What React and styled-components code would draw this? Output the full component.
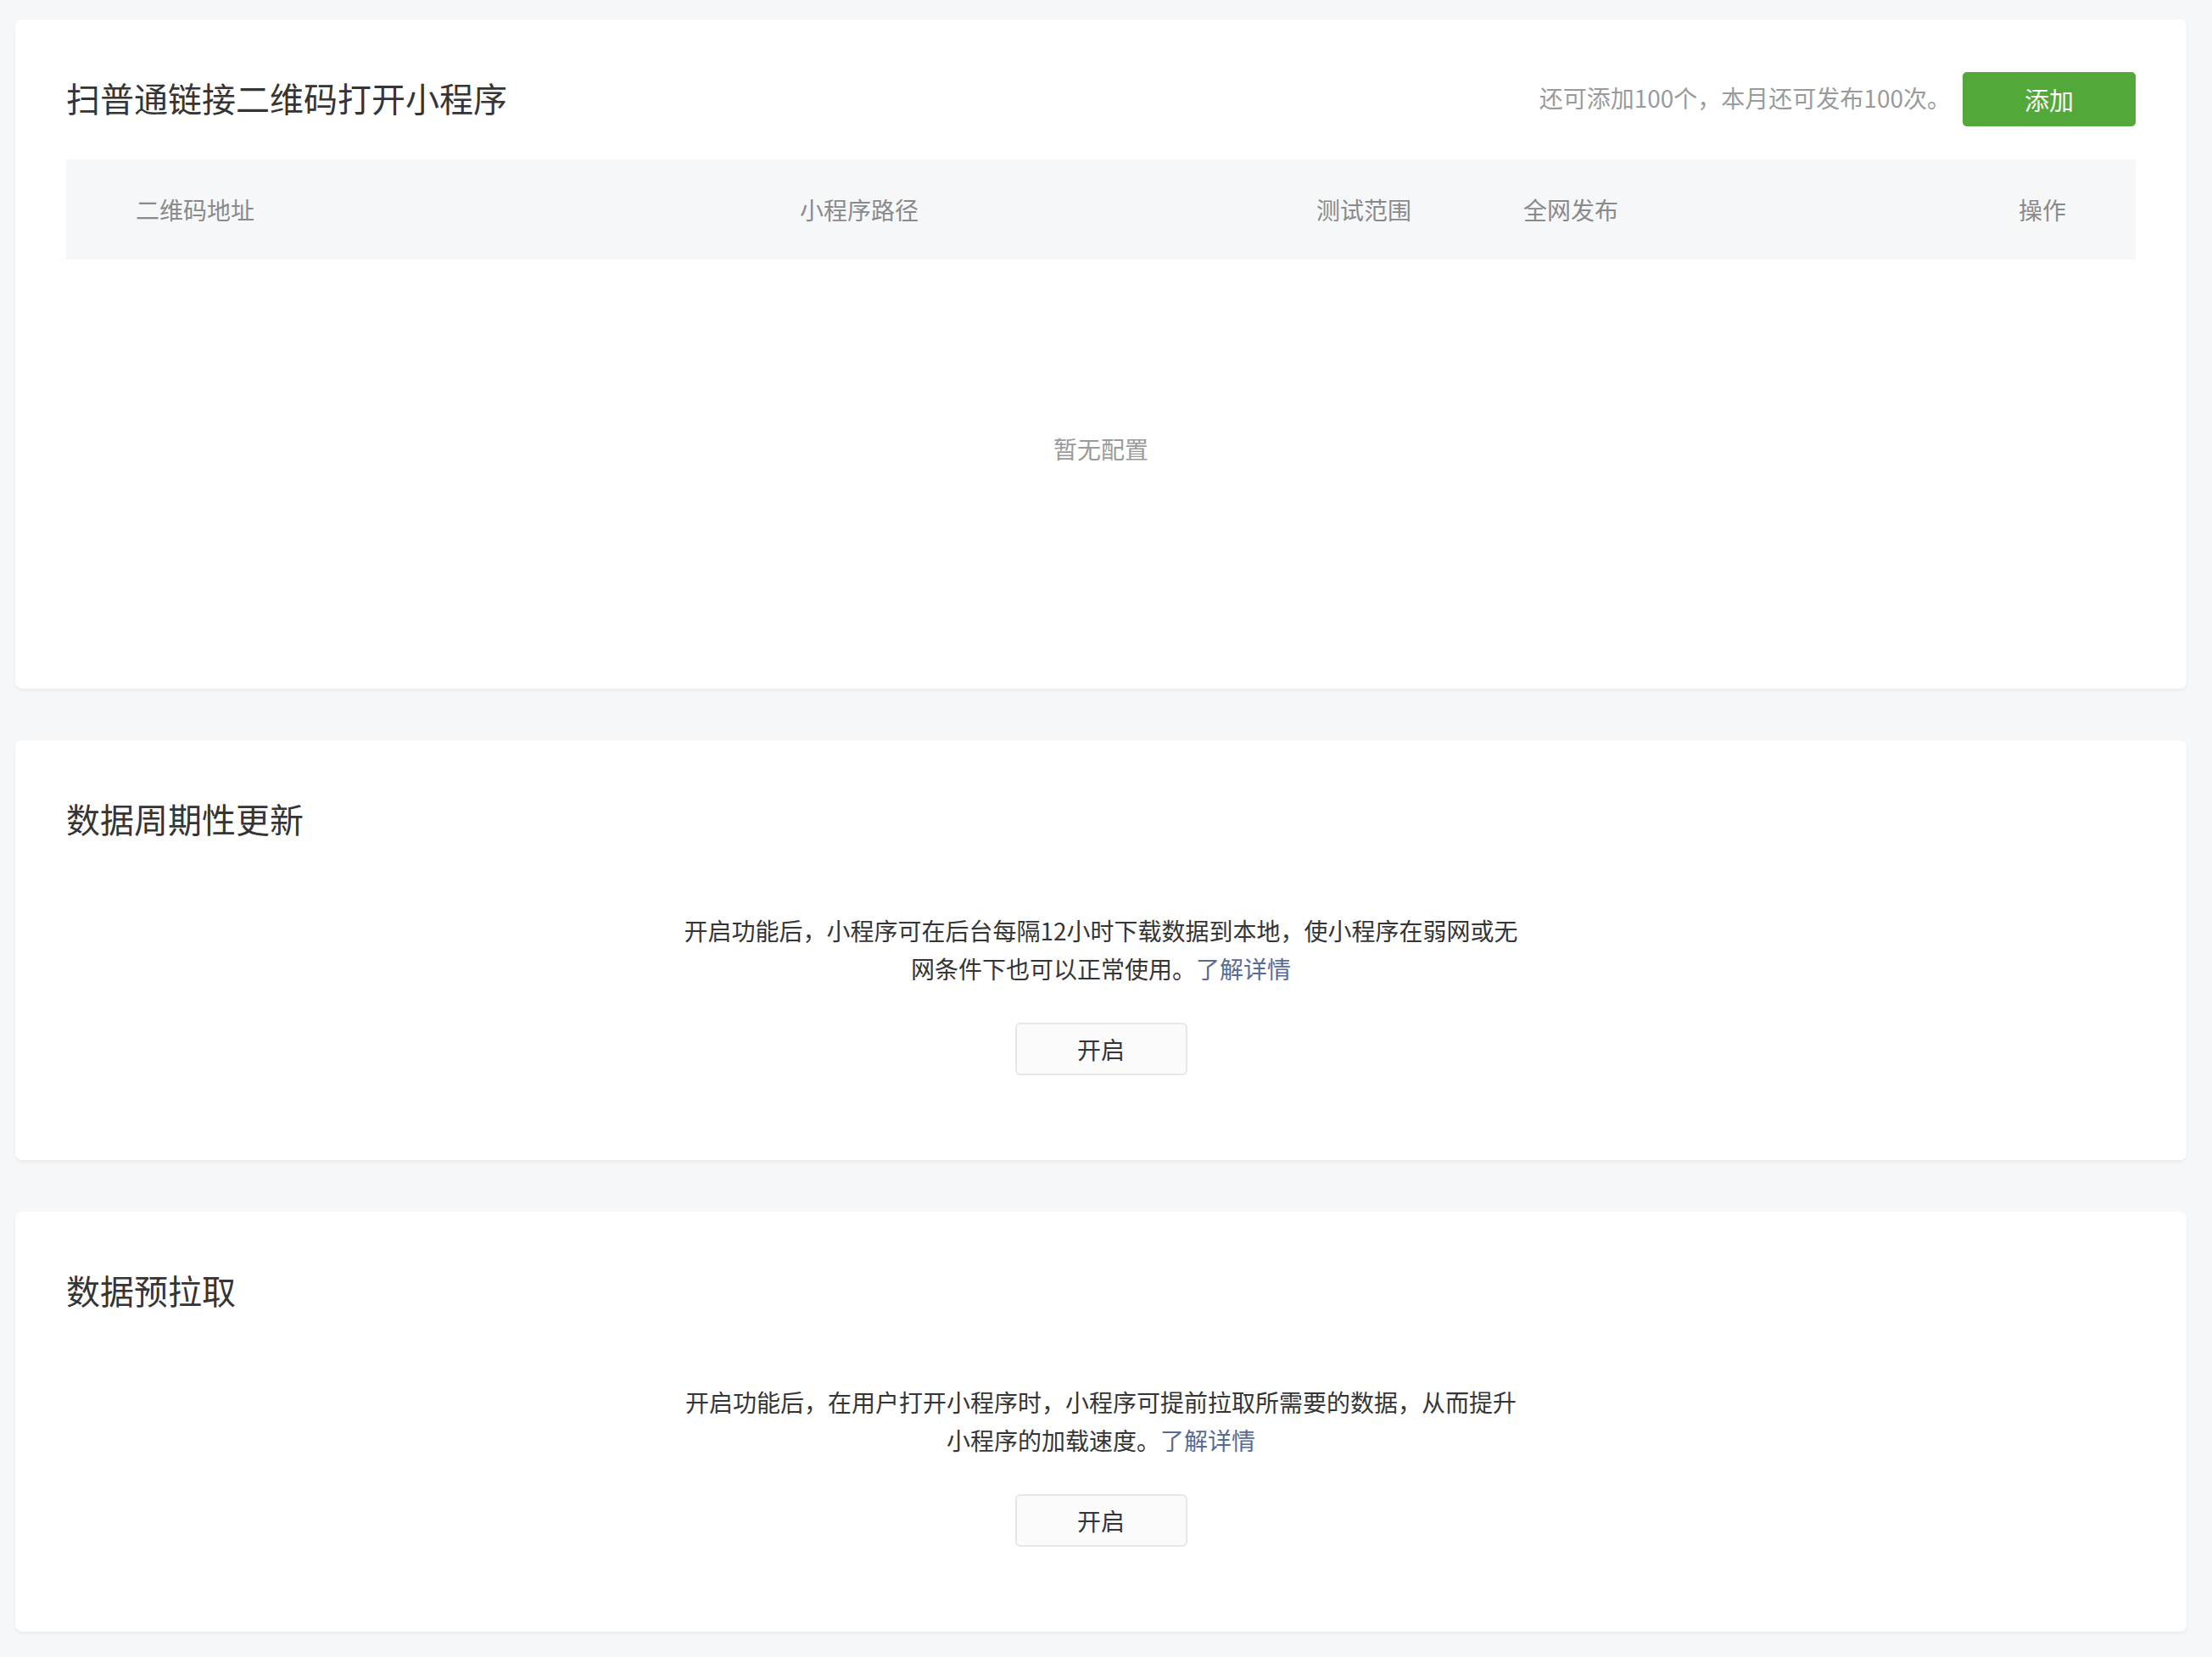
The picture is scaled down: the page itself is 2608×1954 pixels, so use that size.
import styled, { createGlobalStyle } from "styled-components";

const GlobalStyle = createGlobalStyle`
    html, body {
        margin: 0;
        padding: 0;
        background: #f6f7f9;
    }
    body {
        font-family: "Noto Sans CJK SC", "Noto Sans", "Liberation Sans", sans-serif;
        color: #353535;
    }
`;

const Page = styled.div`
    display: flex;
    flex-direction: column;
    gap: 61px;
    padding: 23px 30px 28px 18px;
    min-height: 1954px;
    box-sizing: border-box;
`;

const Card = styled.section`
    background: #fff;
    border-radius: 8px;
    box-shadow: 0 2px 4px rgba(0, 0, 0, 0.06);
    padding: 60px 60px ${({ $bottom }) => $bottom || 60}px 60px;
    display: flex;
    flex-direction: column;
`;

const CardHead = styled.div`
    display: flex;
    align-items: center;
    justify-content: space-between;
    height: 64px;
`;

const Title = styled.h2`
    margin: 0;
    font-size: 40px;
    font-weight: 400;
    line-height: 64px;
    color: #353535;
`;

const HeadRight = styled.div`
    display: flex;
    align-items: center;
    gap: 14px;
`;

const Quota = styled.span`
    font-size: 28px;
    color: #9a9a9a;
`;

const PrimaryButton = styled.button`
    width: 204px;
    height: 64px;
    margin-top: 4px;
    border: none;
    border-radius: 5px;
    background: #52a839;
    color: #fff;
    font-family: inherit;
    font-size: 29px;
    cursor: pointer;
`;

const TableHead = styled.div`
    margin-top: 41px;
    height: 118px;
    background: #f6f7f9;
    display: grid;
    grid-template-columns: 783px 609px 244px 1fr auto;
    align-items: center;
    padding: 0 82px;
`;

const HeadCell = styled.div`
    font-size: 28px;
    color: #8a8a8a;
`;

const Empty = styled.div`
    height: 446px;
    display: flex;
    align-items: center;
    justify-content: center;
    font-size: 28px;
    color: #9a9a9a;
`;

const Body = styled.div`
    margin-top: 78px;
    display: flex;
    flex-direction: column;
    align-items: center;
    gap: 41px;
`;

const Desc = styled.p`
    margin: 0;
    width: 984px;
    font-size: 28px;
    line-height: 45px;
    text-align: center;
    color: #353535;
`;

const Link = styled.a`
    color: #576b95;
    text-decoration: none;
    cursor: pointer;
`;

const DefaultButton = styled.button`
    width: 203px;
    height: 62px;
    border: 2px solid #e4e7eb;
    border-radius: 6px;
    background: #fbfbfb;
    color: #353535;
    font-family: inherit;
    font-size: 28px;
    cursor: pointer;
`;

const features = [
    {
        title: "数据周期性更新",
        text: "开启功能后，小程序可在后台每隔12小时下载数据到本地，使小程序在弱网或无网条件下也可以正常使用。",
    },
    {
        title: "数据预拉取",
        text: "开启功能后，在用户打开小程序时，小程序可提前拉取所需要的数据，从而提升小程序的加载速度。",
    },
];

function QrCard() {
    return (
        <Card>
            <CardHead>
                <Title>扫普通链接二维码打开小程序</Title>
                <HeadRight>
                    <Quota>还可添加100个，本月还可发布100次。</Quota>
                    <PrimaryButton>添加</PrimaryButton>
                </HeadRight>
            </CardHead>
            <TableHead>
                <HeadCell>二维码地址</HeadCell>
                <HeadCell>小程序路径</HeadCell>
                <HeadCell>测试范围</HeadCell>
                <HeadCell>全网发布</HeadCell>
                <HeadCell>操作</HeadCell>
            </TableHead>
            <Empty>暂无配置</Empty>
        </Card>
    );
}

function FeatureCard({ title, text }) {
    return (
        <Card $bottom={100}>
            <CardHead>
                <Title>{title}</Title>
            </CardHead>
            <Body>
                <Desc>
                    {text}
                    <Link>了解详情</Link>
                </Desc>
                <DefaultButton>开启</DefaultButton>
            </Body>
        </Card>
    );
}

export default function App() {
    return (
        <>
            <GlobalStyle />
            <Page>
                <QrCard />
                {features.map((f) => (
                    <FeatureCard key={f.title} title={f.title} text={f.text} />
                ))}
            </Page>
        </>
    );
}
